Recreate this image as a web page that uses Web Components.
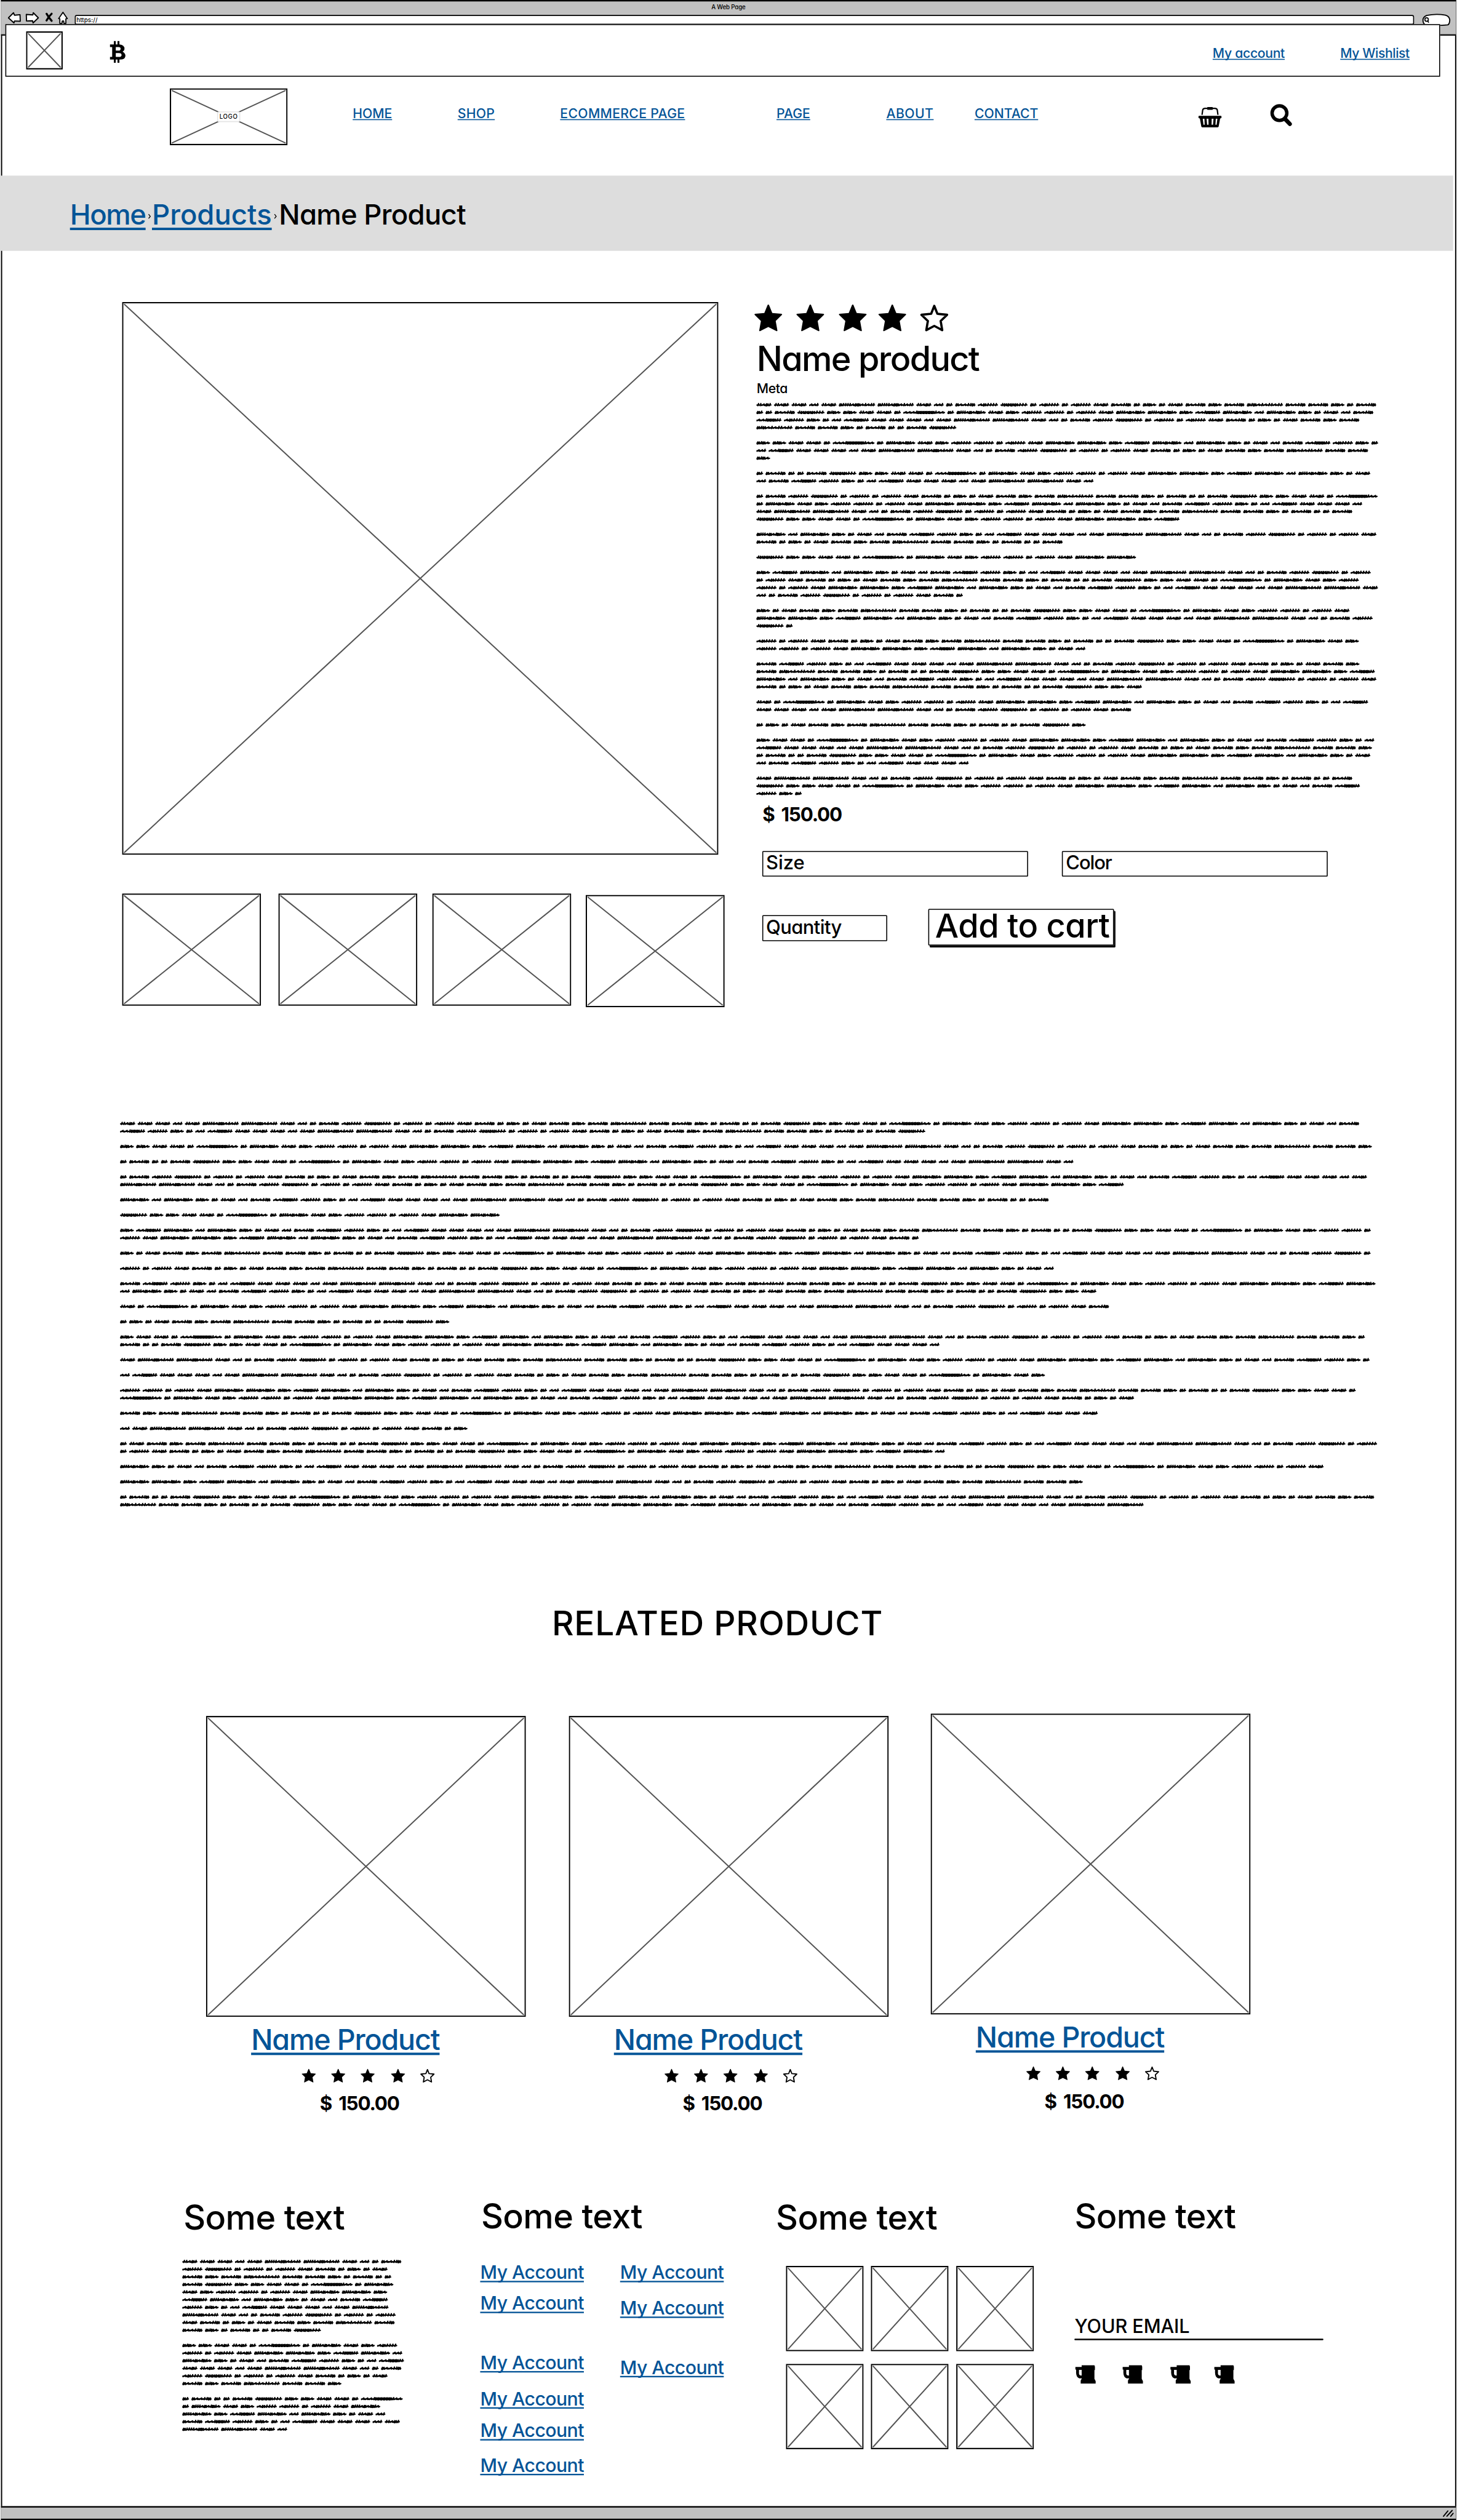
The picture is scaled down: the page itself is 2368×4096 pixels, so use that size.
<!DOCTYPE html>
<html lang="en">
<head>
<meta charset="utf-8">
<title>A Web Page</title>
<style>
html,body{margin:0;padding:0;background:#fff}
body{font-family:Inter,"Liberation Sans",sans-serif}
</style>
</head>
<body>
<wire-page></wire-page>
<script>
const LINK='#045497';
function define(name,build,extra){
  customElements.define(name,class extends HTMLElement{
    connectedCallback(){
      if(this.shadowRoot)return;
      const root=this.attachShadow({mode:'open'});
      root.innerHTML=build(this);
      if(extra)extra(this,root);
    }
  });
}
const num=(el,a,d)=>el.hasAttribute(a)?parseFloat(el.getAttribute(a)):d;

/* One line of lettering. Its box runs from cap height to baseline; w is the width it is spaced out to. */
define('wire-text',el=>{
  const s=num(el,'s',26),link=el.hasAttribute('link');
  return `<style>
  :host{display:block;flex:none;width:${num(el,'w',100)}px;height:${(s*.727).toFixed(2)}px}
  span{display:inline-block;white-space:nowrap;font-size:${s}px;line-height:.727;font-weight:${num(el,'b',500)};word-spacing:${num(el,'gap',0)}px;
    font-feature-settings:"cv11","ss03";color:${link?LINK:'#000'};vertical-align:top;
    ${link?`text-decoration:underline;text-decoration-thickness:${num(el,'u',2.2)}px;text-underline-offset:${num(el,'o',1.8)}px;text-decoration-skip-ink:none`:''}}
  </style><span><slot></slot></span>`;
},(el,root)=>{
  const sp=root.querySelector('span'),n=el.textContent.length;
  sp.style.letterSpacing='0';
  sp.style.letterSpacing=((num(el,'w',100)-sp.offsetWidth)/n).toFixed(3)+'px';
});

/* Crossed-out picture box */
define('wire-image',el=>{
  const w=num(el,'w',100),h=num(el,'h',100);
  return `<style>:host{display:block;flex:none;position:relative;width:${w}px;height:${h}px}svg{display:block}
  div{position:absolute;left:50%;top:50%;transform:translate(-50%,-50%);background:#fff;border:2px solid #e4e4e4;border-radius:4px;padding:4px 3px 5px}
  </style><svg width="${w}" height="${h}"><rect x="1.3" y="1.4" width="${w-2.6}" height="${h-2.8}" fill="#fff" stroke="#000" stroke-width="2.7"/>
  <path d="M5 5L${w-5} ${h-5}M${w-5} 5L5 ${h-5}" stroke="#555" stroke-width="2.6" stroke-linecap="round"/></svg>
  ${el.childElementCount?'<div><slot></slot></div>':''}`;
});

const STAR='M50 2Q52 2 53 5L64 33L96 36Q100 37 98 40L76 62L82 97Q82 100 79 99L50 84L21 99Q18 100 18 97L24 62L2 40Q0 37 4 36L36 33L47 5Q48 2 50 2Z';
define('wire-star',el=>{
  const w=num(el,'w',59),h=num(el,'h',57),o=el.hasAttribute('open');
  return `<style>:host{display:block;flex:none;width:${w}px;height:${h}px}svg{display:block;overflow:visible}</style>
  <svg width="${w}" height="${h}" viewBox="0 0 100 100" preserveAspectRatio="none">${o?
  `<path d="M50 7L61 36L95 39.500L72.500 62L78 95.500L50 80L22 95.500L27.500 62L5 39.500L39 36Z" fill="#fff" stroke="#000" stroke-width="8" stroke-linejoin="round"/>`:
  `<path d="${STAR}"/>`}</svg>`;
});

const ICONS={
  back:[27,24,'<path d="M1.500 12L12 1.500L14 6.500L25.500 5.500L26 19L14 18.500L13 22.500Z" fill="#fff" stroke="#000" stroke-width="2.400" stroke-linejoin="round"/>'],
  forward:[28,24,'<path d="M26.500 12L16 1.500L15 6L1.500 5L2 18.500L14.500 18L15.500 22.500Z" fill="#fff" stroke="#000" stroke-width="2.400" stroke-linejoin="round"/>'],
  close:[15,19,'<path d="M2.500 2.500Q7 11 13 17M13 2.500Q7 8 2.500 16.500" fill="none" stroke="#000" stroke-width="4.200" stroke-linecap="round"/>'],
  home:[21,26,'<path d="M10.500 1.500L19.500 14.500L16.500 15L16.500 24.500L12.500 24.500L12 19.500L9 19.500L8.500 24.500L4 24.500L4 15L1.500 14.500Z" fill="#fff" stroke="#000" stroke-width="2.300" stroke-linejoin="round"/>'],
  pill:[58,25,'<path d="M9 3Q29 -1 48 2.500Q56 5 57 12Q57 20 53 22.500Q30 25 7 22.500Q1 20 1.500 12Q2 6 9 3Z" fill="#fff" stroke="#000" stroke-width="2.400"/><ellipse cx="9" cy="11.500" rx="3.600" ry="3.800" fill="none" stroke="#000" stroke-width="2.200"/><path d="M11 14.500L13.500 18" stroke="#000" stroke-width="2.200"/>'],
  coin:[32,45,'<path fill-rule="evenodd" d="M0 7H20Q30 8 30 16Q30 20 26 22Q32 25 32 31Q31 38.500 21 38.500H0V33H4.500V12.500H0ZM12 12.500H18Q22 12.500 22 16Q22 20 18 20H12ZM12 25H18.500Q24 25 24 29Q24 33 18.500 33H12Z"/><path d="M10 0V8M17.500 0V8M10 37V45M17.500 37V45" stroke="#000" stroke-width="4"/>'],
  basket:[48,42,'<path d="M7.500 16L9 5.500Q10 2.500 14 2.500H34Q38 2.500 39 5.500L40.500 16" fill="none" stroke="#000" stroke-width="2.800"/><rect x="18" y="0" width="12" height="5.500" rx="1.500"/><path fill-rule="evenodd" d="M1.500 18H46.500Q48 18 48 20.500T46 23.500H45L42 40Q41.500 42 39 42H9Q6.500 42 6 40L3 23.500H2Q0 23 0 20.500T1.500 18ZM9 24L10.500 36.500H13L12.500 24ZM17 24L18 36.500H21L20.800 24ZM27.500 24L27.300 36.500H30.300L31.300 24ZM36 24L35.300 36.500H37.800L39.300 24Z"/>'],
  search:[45,45,'<ellipse cx="19" cy="18.500" rx="15.300" ry="15.200" fill="none" stroke="#000" stroke-width="7"/><path d="M30 30L40.500 41" stroke="#000" stroke-width="8.500" stroke-linecap="round"/>'],
  mug:[42,38,'<path fill-rule="evenodd" d="M13 0H39.500L40.500 3V10H39.500V28L42 33V38H11V31.500L13.500 27H8Q2 25 1.500 16V9H0V3.500H13ZM7.500 9.500V18Q8 20.500 10 21L13 21.500V9.500Z"/>'],
  grip:[24,16,'<path d="M2 14L11 3M9 14L20 2M17 14L22 8" stroke="#000" stroke-width="2.400" stroke-linecap="round"/>']
};
define('wire-icon',el=>{
  const [w,h,p]=ICONS[el.getAttribute('name')];
  return `<style>:host{display:block;flex:none;width:${w}px;height:${h}px}svg{display:block;overflow:visible}</style><svg width="${w}" height="${h}">${p}</svg>`;
});

/* Scribbled filler: a repeating run of words, each kind with its advance and stroke rhythm */
const RUN='aaabaccabdefgdfdfaedhdaehel'+'eehdeddeghhaadkdiahffdfaiihjibihdabejfhdbj';
const ADV={a:36.4,b:25.25,c:80.3,d:18.92,e:47,f:46.75,g:61.3,h:33.25,i:65.5,j:57,k:91.4,l:80};
const BEAT={a:'iinui',b:'nni',c:'uiiiinuuninii',d:'ui',e:'unniiu',f:'nuiiii',g:'iuuuuiii',h:'uiun',i:'uiiinuniuin',j:'nniuuuii',k:'nnniuuuuuuinn',l:'uiuniniinii'};
const MARK={};
for(const k in BEAT){
  const size={i:3.6,n:6.2,u:4.6},tot=[...BEAT[k]].reduce((t,c)=>t+size[c],0),f=(ADV[k]-7.4)/tot;
  let x=1.2,d='';const p=v=>v.toFixed(1);
  for(const c of BEAT[k]){
    const a=size[c]*f;
    if(c==='i')d+=`M${p(x)} .9l${p(a*.75)} -.8M${p(x+a*.35)} 2l1.4 -4.3`;
    if(c==='n')d+=`M${p(x)} 1.6l${p(a*.6)} -3l.3 3l${p(a*.35)} -1.2`;
    if(c==='u')d+=`M${p(x)} 2.200l1.500 -4l.2 4.200l${p(a*.5)} -4l.1 3.800`;
    x+=a;
  }
  d+=`M1.200 .6H${p(ADV[k]-6.4)}`;
  MARK[k]=d;
}
const COUNTS=[105,63,48,115,49,18];
define('wire-scribble',el=>{
  const W=num(el,'w',400),P=num(el,'paragraphs',3);
  let n=0,y=7.9,out='';
  for(let p=0;p<P;p++){
    let x=0;
    for(let i=0;i<COUNTS[p%6];i++,n++){
      const k=RUN[n%RUN.length],a=ADV[k];
      if(x+a-5>W){x=0;y+=15.8}
      out+=`<path transform="translate(${x.toFixed(1)} ${y.toFixed(1)})" d="${MARK[k]}"/>`;
      x+=a;
    }
    y+=31.6;
  }
  const H=y-31.6+7.9;
  return `<style>:host{display:block;flex:none;width:${W}px;height:${H}px}svg{display:block;overflow:visible}</style>
  <svg width="${W}" height="${H}" fill="none" stroke="#000" stroke-width="2.800" stroke-linecap="round" stroke-linejoin="round">${out}</svg>`;
});

define('wire-field',el=>`<style>:host{display:block;flex:none;box-sizing:border-box;width:${el.getAttribute('w')}px;height:53.5px;border:solid #000;border-width:2.500px 2px 2.800px;border-radius:2px;padding:8.500px 0 0 6px}</style><slot></slot>`);
define('wire-button',()=>`<style>:host{display:block;flex:none;box-sizing:border-box;width:385px;height:76px;border:2px solid #000;box-shadow:3px 4px 0 #000;border-radius:2px;padding:8px 0 0 12px}</style><slot></slot>`);

define('browser-bar',()=>`<style>
:host{display:block;flex:none;box-sizing:border-box;height:74px;background:#c1c1c1;border-top:3px solid #000;border-bottom:3px solid #111;margin:0 2px;overflow:hidden}
.row{display:flex;align-items:flex-start;margin-top:4px}
.url{box-sizing:border-box;flex:none;width:2776px;height:21px;background:#fff;border:2.500px solid #000;border-bottom-width:3px;border-radius:4px;margin:8px 0 0 14px;padding:4px 0 0 1.500px}
</style>
<wire-text w="71" s="12.4" style="margin:7px 0 0 1472.500px">A Web Page</wire-text>
<div class="row">
<wire-icon name="back" style="margin:2px 0 0 14px"></wire-icon>
<wire-icon name="forward" style="margin:2px 0 0 10px"></wire-icon>
<wire-icon name="close" style="margin:3px 0 0 13px"></wire-icon>
<wire-icon name="home" style="margin:1px 0 0 11px"></wire-icon>
<div class="url"><wire-text w="44" s="12.4">https://</wire-text></div>
<wire-icon name="pill" style="margin:5.500px 0 0 17px"></wire-icon>
</div>`);

define('top-bar',()=>`<style>
:host{display:flex;flex:none;align-items:flex-start;box-sizing:border-box;position:relative;width:2974px;height:109px;margin:-24px 0 0 11px;background:#fff;border:solid #000;border-width:2.500px 2px 2.500px 2.500px}
</style>
<wire-image w="76" h="79" style="margin:12.500px 0 0 40.500px"></wire-image>
<wire-icon name="coin" style="margin:33px 0 0 98px"></wire-icon>
<wire-text link w="149" s="27" style="margin:49px 0 0 2254px">My account</wire-text>
<wire-text link w="144" s="27" style="margin:49px 0 0 115.500px">My Wishlist</wire-text>`);

define('site-nav',()=>`<style>
:host{display:flex;flex:none;align-items:flex-start;height:205px}
.m{margin-top:66.500px}
</style>
<wire-image w="244" h="118" style="margin:24px 0 0 352px"><wire-text w="38" s="12.4">LOGO</wire-text></wire-image>
<wire-text class="m" link w="82" s="27" style="margin-left:135px">HOME</wire-text>
<wire-text class="m" link w="77.5" s="27" style="margin-left:135.500px">SHOP</wire-text>
<wire-text class="m" link w="259" s="27" style="margin-left:135px">ECOMMERCE PAGE</wire-text>
<wire-text class="m" link w="70" s="27" style="margin-left:189.500px">PAGE</wire-text>
<wire-text class="m" link w="98" s="27" style="margin-left:157.500px">ABOUT</wire-text>
<wire-text class="m" link w="132" s="27" style="margin-left:85px">CONTACT</wire-text>
<wire-icon name="basket" style="margin:63px 0 0 332px"></wire-icon>
<wire-icon name="search" style="margin:57px 0 0 101px"></wire-icon>`);

define('bread-crumb',()=>`<style>
:host{display:flex;flex:none;align-items:flex-start;width:3012px;height:156px;background:#ddd}
wire-text{margin-top:59.500px}
svg{flex:none;margin-top:79px}
</style>
<wire-text link w="157" s="58" u="5" o="5.5" style="margin-left:145px">Home</wire-text>
<svg width="13" height="11"><path d="M6 1L9.500 5.500L6 10" fill="none" stroke="#000" stroke-width="1.700"/></svg>
<wire-text link w="248" s="58" u="5" o="5.5">Products</wire-text>
<svg width="17" height="11"><path d="M6 1L9.500 5.500L6 10" fill="none" stroke="#000" stroke-width="1.700"/></svg>
<wire-text w="387" s="58" style="margin-left:-2px">Name Product</wire-text>`);

define('product-detail',()=>`<style>
:host{display:flex;flex:none;align-items:flex-start;height:1801px}
.gallery{width:1249px;flex:none;margin:106px 66px 0 253.300px}
.row{display:flex;align-items:flex-start}
</style>
<div class="gallery">
<wire-image w="1236" h="1146"></wire-image>
<div class="row" style="margin-top:80px">
<wire-image w="288" h="233"></wire-image>
<wire-image w="288" h="233" style="margin-left:35.500px"></wire-image>
<wire-image w="288" h="233" style="margin-left:31px"></wire-image>
<wire-image w="288" h="233" style="margin:3px 0 0 30.500px"></wire-image>
</div></div>
<div>
<div class="row" style="margin:109.500px 0 0 -5.500px">
<wire-star></wire-star><wire-star style="margin-left:28.500px"></wire-star><wire-star style="margin-left:28.500px"></wire-star><wire-star style="margin-left:23px"></wire-star><wire-star open style="margin-left:28px"></wire-star>
</div>
<wire-text w="461" s="71" style="margin:31.500px 0 0 0">Name product</wire-text>
<wire-text w="64" s="27" style="margin-top:26px">Meta</wire-text>
<wire-scribble w="1291" paragraphs="14" style="margin-top:16px"></wire-scribble>
<wire-text w="164" s="40" b="660" gap="6" style="margin:21px 0 0 12px">$ 150.00</wire-text>
<div class="row" style="margin:61px 0 0 11.500px">
<wire-field w="551"><wire-text w="80" s="39.500">Size</wire-text></wire-field>
<wire-field w="551" style="margin-left:70.500px"><wire-text w="95" s="39.500">Color</wire-text></wire-field>
</div>
<div class="row" style="margin:67px 0 0 11.500px">
<wire-field w="259" style="margin-top:13px"><wire-text w="157" s="39.500">Quantity</wire-text></wire-field>
<wire-button style="margin-left:85.500px"><wire-text w="362" s="69">Add to cart</wire-text></wire-button>
</div>
</div>`);

define('product-card',()=>`<style>:host{display:block;flex:none;width:663px}.row{display:flex;margin:38.500px 0 0 198px}</style>
<wire-image w="663" h="624"></wire-image>
<wire-text link w="391" s="59.500" u="5" o="5.5" style="margin:25.500px 0 0 93.500px">Name Product</wire-text>
<div class="row"><wire-star w="30" h="29"></wire-star><wire-star w="30" h="29" style="margin-left:31px"></wire-star><wire-star w="30" h="29" style="margin-left:31px"></wire-star><wire-star w="30" h="29" style="margin-left:33px"></wire-star><wire-star open w="30" h="29" style="margin-left:31px"></wire-star></div>
<wire-text w="164" s="40" b="660" gap="6" style="margin:29px 0 0 236px">$ 150.00</wire-text>`);

define('related-products',()=>`<style>:host{display:block;flex:none;height:1433px}.row{display:flex;align-items:flex-start;margin:161px 0 0 427px}</style>
<wire-text w="686" s="70" style="margin:213px 0 0 1144px">RELATED PRODUCT</wire-text>
<div class="row"><product-card style="margin-top:5px"></product-card><product-card style="margin:5px 0 0 89px"></product-card><product-card style="margin-left:87px"></product-card></div>`);

define('site-footer',()=>{
  const link=m=>`<wire-text link w="215" s="38.5" u="2.8" o="3.5" style="margin-top:${m}px">My Account</wire-text>`;
  const thumbs='<wire-image w="161" h="177"></wire-image>'.repeat(6);
  return `<style>
:host{display:flex;flex:none;align-items:flex-start;height:600px}
.col{flex:none}.row{display:flex;align-items:flex-start}
.grid{display:grid;grid-template-columns:repeat(3,161px);gap:26px 15.200px;margin:74.500px 0 0 20px}
.line{height:3px;border-radius:2px;background:#000;width:516px;margin-top:12px}
</style>
<div class="col" style="margin-left:378.300px;width:461px">
<wire-text w="334" s="71" style="margin:11px 0 0 2px">Some text</wire-text>
<wire-scribble w="461" paragraphs="3" style="margin-top:57.500px"></wire-scribble></div>
<div class="col" style="margin-left:156px;width:506px">
<wire-text w="334" s="71" style="margin:8.500px 0 0 2px">Some text</wire-text>
<div class="row" style="margin-top:76.500px">
<div>${link(0)+link(35.9)+link(94.4)+link(46.9)+link(38.4)+link(44.4)}</div>
<div style="margin-left:75px">${link(0)+link(45.9)+link(94.9)}</div></div></div>
<div class="col" style="margin-left:108px;width:534px">
<wire-text w="334" s="71" style="margin:11px 0 0 -1px">Some text</wire-text>
<div class="grid">${thumbs}</div></div>
<div class="col" style="margin-left:84px">
<wire-text w="334" s="71" style="margin:8.500px 0 0 0">Some text</wire-text>
<wire-text w="239" s="39" style="margin:188px 0 0 0">YOUR EMAIL</wire-text>
<div class="line"></div>
<div class="row" style="margin:52px 0 0 2px"><wire-icon name="mug"></wire-icon><wire-icon name="mug" style="margin-left:56px"></wire-icon><wire-icon name="mug" style="margin-left:57px"></wire-icon><wire-icon name="mug" style="margin-left:49px"></wire-icon></div></div>`;
});

define('status-bar',()=>`<style>:host{display:flex;flex:none;justify-content:flex-end;box-sizing:border-box;height:29px;background:#c1c1c1;border-top:3px solid #000;border-bottom:3px solid #000;margin:auto 2px 0;padding:4px 4px 0 0}</style><wire-icon name="grip"></wire-icon>`);

define('wire-page',()=>`<style>
:host{display:block;width:2368px;height:4096px;overflow:hidden}
.sheet{display:flex;flex-direction:column;width:3020px;height:5224px;transform:scale(.78411);transform-origin:0 0;
background:linear-gradient(#000,#000) 1.500px 0/2.500px 100% no-repeat,linear-gradient(#000,#000) 3016px 0/2.500px 100% no-repeat,#fff}
</style>
<div class="sheet">
<browser-bar></browser-bar>
<top-bar></top-bar>
<site-nav></site-nav>
<bread-crumb></bread-crumb>
<product-detail></product-detail>
<wire-scribble w="2612" paragraphs="22" style="margin-left:248.700px"></wire-scribble>
<related-products></related-products>
<site-footer></site-footer>
<status-bar></status-bar>
</div>`);
</script>
</body>
</html>
